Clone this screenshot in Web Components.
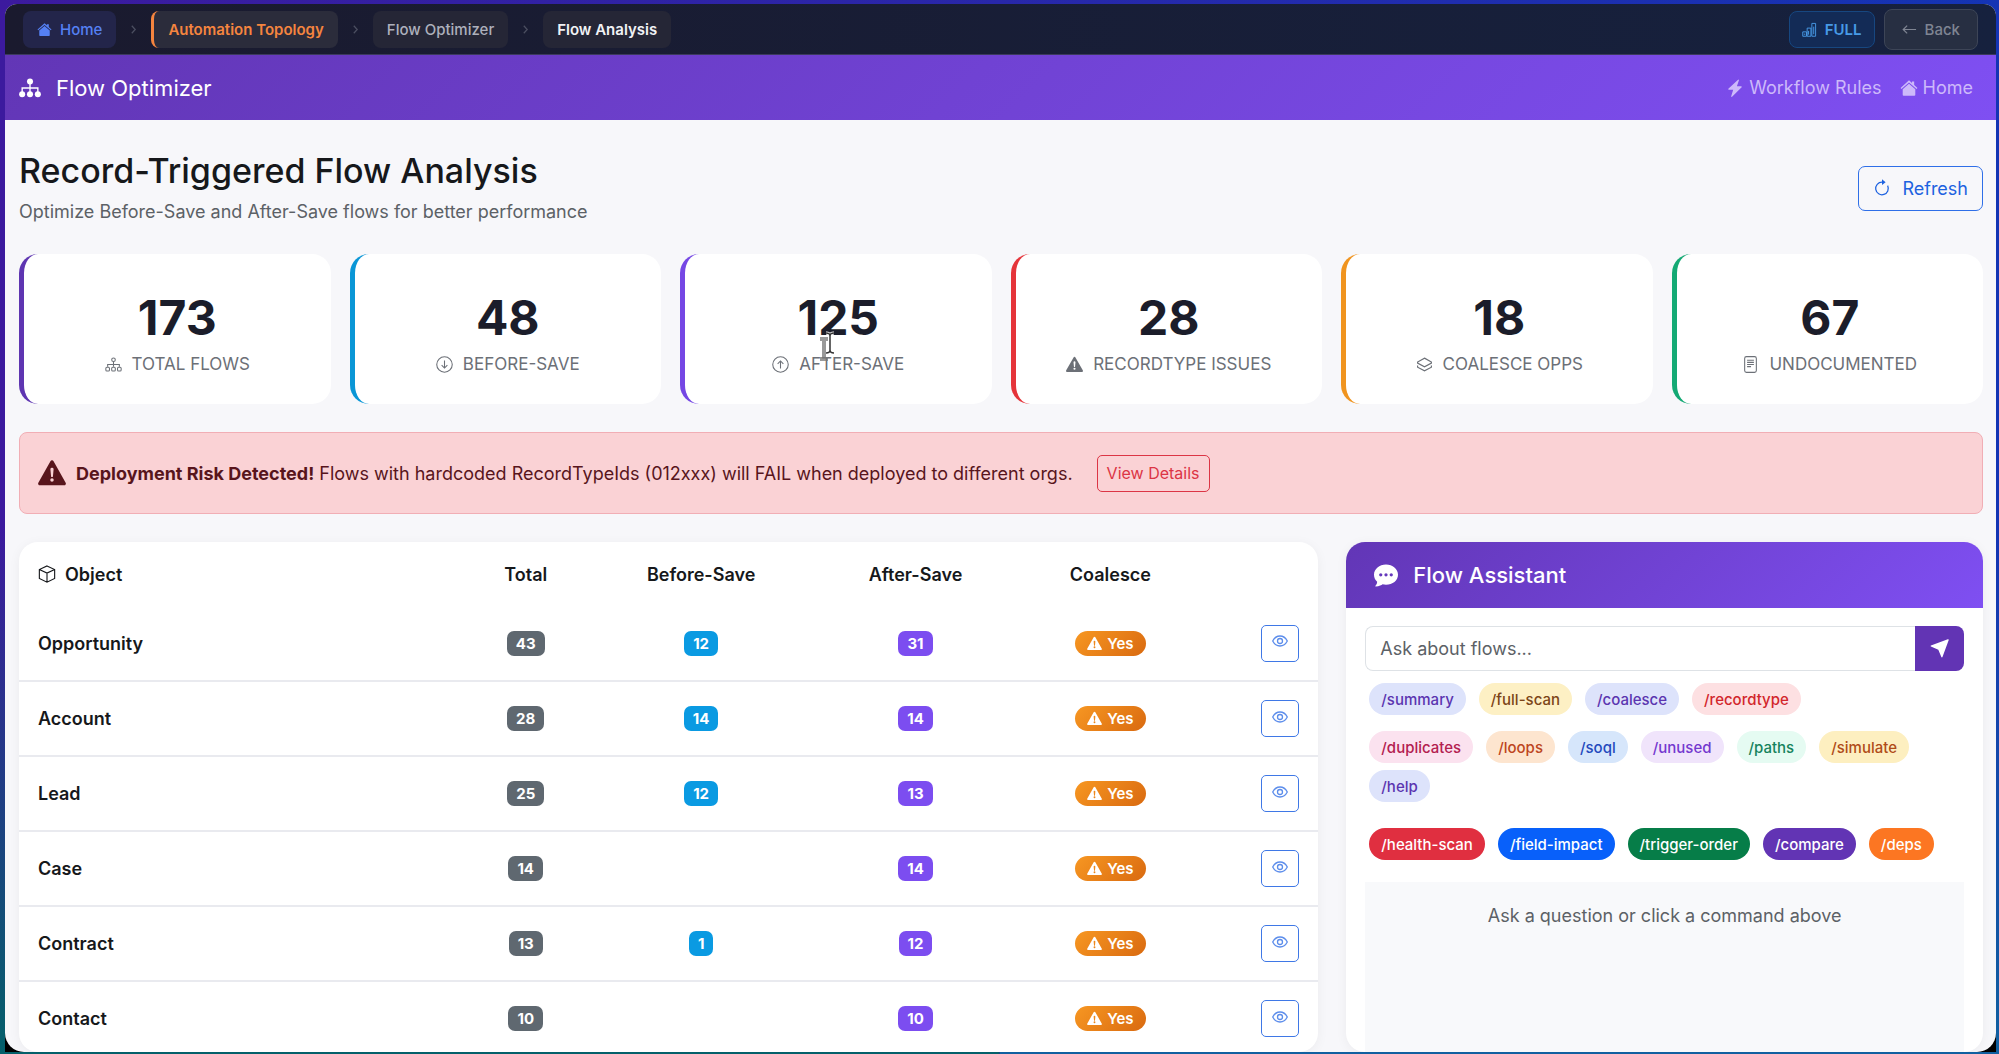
<!DOCTYPE html>
<html lang="en">
<head>
<meta charset="utf-8">
<title>Flow Optimizer</title>
<style>
  html, body {
    height: 100%;
    margin: 0;
  }

  body {
    box-sizing: border-box;
    padding: 4px 3px 2px 5px;
    overflow: hidden;
    background:
      linear-gradient(#000, #000) 5px calc(100% - 2px) / 19px 19px no-repeat,
      linear-gradient(#000, #000) calc(100% - 3px) calc(100% - 2px) / 19px 19px no-repeat,
      linear-gradient(to bottom, transparent 50%, #04606a) left / 50% 100% no-repeat,
      linear-gradient(to bottom, transparent 50%, #1160a0) right / 50% 100% no-repeat,
      linear-gradient(to right, #3c1a9e, #1434b4);
    font-family: Inter, "Liberation Sans", sans-serif;
    font-size: 18px;
    color: #212529;
  }
</style>
</head>
<body>
<flow-app></flow-app>

<script>
// 16x16 glyphs, drawn with currentColor
const icons = {
  house: '<path d="M8 1.2 10.6 3.5V2.3h2v3l2.9 2.6-.8 1L8 3.1 1.3 8.9l-.8-1z"/><path d="M8 4.2l5.6 4.9V14a.8.8 0 0 1-.8.8H3.2a.8.8 0 0 1-.8-.8V9.1z"/>',
  chevron: '<path d="M5.5 2.5 10.5 8l-5 5.5" fill="none" stroke="currentColor" stroke-width="1.8"/>',
  chart: '<g fill="none" stroke="currentColor"><path d="M.8 10.5h4v4.7h-4zM5.5 6.5h4v8.7h-4zM10.5 1.5h4v13.7h-4z"/><path d="M2 13h1.5M7 9.5v4M12.5 5v8"/></g>',
  arrow: '<path d="M15 8H1.5M5.5 3.8 1.3 8l4.2 4.2" fill="none" stroke="currentColor" stroke-width="1.3"/>',
  diagram: '<circle cx="8" cy="3.3" r="2.2"/><circle cx="2.3" cy="12.5" r="2.2"/><circle cx="8" cy="12.5" r="2.2"/><circle cx="13.7" cy="12.5" r="2.2"/><path d="M8 4v8M2.3 12V8h11.4v4" fill="none" stroke="currentColor"/>',
  diagramLine: '<g fill="none" stroke="currentColor"><circle cx="8" cy="3.5" r="1.7"/><rect x=".8" y="10.5" width="3.4" height="3.7" rx="1"/><rect x="6.3" y="10.5" width="3.4" height="3.7" rx="1"/><rect x="11.8" y="10.5" width="3.4" height="3.7" rx="1"/><path d="M8 5.2v5M2.5 10.2V8h11v2.2"/></g>',
  bolt: '<path d="M11.3.6a.5.5 0 0 1 .2.6L9.7 6.5h3.8a.5.5 0 0 1 .4.85l-8.5 8.5a.5.5 0 0 1-.8-.5L6.4 9.5H2.5a.5.5 0 0 1-.4-.85l8.6-8a.5.5 0 0 1 .6-.05z"/>',
  refresh: '<path d="M8 2.8a5.6 5.6 0 1 0 5 3.1" fill="none" stroke="currentColor" stroke-width="1.1"/><path d="M8 .3v5l3.2-2.5z"/>',
  down: '<g fill="none" stroke="currentColor"><circle cx="8" cy="8" r="7.3"/><path d="M8 4.3v7M5.3 8.7 8 11.4l2.7-2.7"/></g>',
  up: '<g fill="none" stroke="currentColor"><circle cx="8" cy="8" r="7.3"/><path d="M8 11.7v-7M5.3 7.3 8 4.6l2.7 2.7"/></g>',
  warning: '<path fill-rule="evenodd" d="M7.1 1.3a1 1 0 0 1 1.8 0l6.9 12.2a1 1 0 0 1-.9 1.5H1.1a1 1 0 0 1-.9-1.5zM8 5a.9.9 0 0 0-.9 1l.35 3.8a.55.55 0 0 0 1.1 0L8.9 6A.9.9 0 0 0 8 5zm0 6a1 1 0 1 0 0 2 1 1 0 0 0 0-2z"/>',
  layers: '<path d="M8 2 14.5 5.7v1L8 10.2 1.5 6.7v-1zM1.5 9v1.5L8 14l6.5-3.5V9" fill="none" stroke="currentColor" stroke-width="1.1"/>',
  file: '<rect x="2.5" y=".6" width="11" height="14.8" rx="1.7" fill="none" stroke="currentColor"/><path d="M4.8 4h6.4M4.8 6h6.4M4.8 8h6.4M4.8 10h3.7" stroke="currentColor"/>',
  box: '<path d="M8 .8 14.8 4v8L8 15.3 1.2 12V4zM1.2 4 8 7.2 14.8 4M8 7.2v8" fill="none" stroke="currentColor"/>',
  eye: '<g fill="none" stroke="currentColor" stroke-width="1.3"><path d="M.7 8S3.3 3 8 3s7.3 5 7.3 5-2.6 5-7.3 5S.7 8 .7 8z"/><circle cx="8" cy="8" r="2.5"/></g>',
  chat: '<path fill-rule="evenodd" d="M8 1c4.4 0 8 3 8 6.8s-3.6 6.7-8 6.7c-.8 0-1.6-.1-2.3-.3-.6.5-2.2 1.3-4.5 1.5-.3 0-.4-.3-.2-.5.7-.8 1.1-1.7 1.1-2.7C.8 11.3 0 9.7 0 7.8 0 4 3.6 1 8 1zM4.5 6.8a1.1 1.1 0 1 0 0 2.2 1.1 1.1 0 0 0 0-2.2zm3.5 0a1.1 1.1 0 1 0 0 2.2 1.1 1.1 0 0 0 0-2.2zm3.5 0a1.1 1.1 0 1 0 0 2.2 1.1 1.1 0 0 0 0-2.2z"/>',
  send: '<path d="M15 .3a.5.5 0 0 1 .7.7l-5.2 14.2a.5.5 0 0 1-.95 0L7 9 .8 6.4a.5.5 0 0 1 0-.9z"/>',
};

/**
 * Attach an open shadow root with the shared reset in front.
 * @param {HTMLElement} host
 * @param {string} html
 */
function render(host, html) {
  const template = document.createElement('template');
  template.innerHTML = `
    <style>
      *, *::before { box-sizing: border-box; }
      button, input { font: inherit; cursor: pointer; }
      a { color: inherit; text-decoration: none; }
    </style>${html}`;
  host.attachShadow({mode: 'open'}).appendChild(template.content.cloneNode(true));
}

/** Inline icon, scales with the font size. */
class FlowIcon extends HTMLElement {
  connectedCallback() {
    render(this, `
      <style>
        :host { display: inline-flex; flex: none; }
        svg { width: 1em; height: 1em; display: block; }
      </style>
      <svg viewBox="0 0 16 16" fill="currentColor" aria-hidden="true">${icons[this.getAttribute('name')]}</svg>`);
  }
}

/** Dark breadcrumb strip. */
class CrumbBar extends HTMLElement {
  constructor() {
    super();
    render(this, `
      <style>
        :host {
          display: flex;
          align-items: center;
          justify-content: space-between;
          height: 51px;
          padding: 0 18px;
          background: linear-gradient(to right, #1a1a2e, #16213e);
          border-bottom: 1px solid #3c3a5e;
          font-size: 15px;
          font-weight: 500;
        }
        nav, div { display: flex; align-items: center; gap: 9px; }
        nav { gap: 12px; }
        nav flow-icon { font-size: 11px; color: #4b4e60; }
        a {
          display: flex;
          align-items: center;
          gap: 8px;
          height: 37px;
          padding: 0 14px;
          border-radius: 8px;
          background: #252636;
          color: #adb0bc;
        }
        a flow-icon, nav a flow-icon { font-size: 15px; color: inherit; }
        .home { background: #23254a; color: #5580f4; }
        .area { background: #2b2c3b; color: #f5853f; border-left: 3px solid #f5853f; font-weight: 600; }
        .here { color: #f1f2f5; font-weight: 600; }
        button {
          display: flex;
          align-items: center;
          gap: 8px;
          height: 41px;
          padding: 0 17px;
          border: 1px solid #3d4557;
          border-radius: 8px;
          background: #272f42;
          color: #7f8592;
          font-weight: 500;
        }
        .full {
          height: 37px;
          padding: 0 12px;
          font-weight: 600;
          background: #132b56;
          border-color: #174780;
          color: #479ae6;
        }
      </style>
      <nav aria-label="Breadcrumb">
        <a class="home" href="#home"><flow-icon name="house"></flow-icon>Home</a>
        <flow-icon name="chevron"></flow-icon>
        <a class="area" href="#topology">Automation Topology</a>
        <flow-icon name="chevron"></flow-icon>
        <a href="#optimizer">Flow Optimizer</a>
        <flow-icon name="chevron"></flow-icon>
        <a class="here" href="#analysis">Flow Analysis</a>
      </nav>
      <div>
        <button class="full" type="button"><flow-icon name="chart"></flow-icon>FULL</button>
        <button type="button"><flow-icon name="arrow"></flow-icon>Back</button>
      </div>`);
  }
}

/** Purple application header. */
class AppHeader extends HTMLElement {
  constructor() {
    super();
    render(this, `
      <style>
        :host {
          display: flex;
          align-items: center;
          justify-content: space-between;
          height: 65px;
          padding: 0 23px 0 14px;
          background: linear-gradient(135deg, #6236b6, #7f4ff2);
          color: #fff;
        }
        .brand { display: flex; align-items: center; gap: 15px; font-size: 22px; }
        nav { display: flex; gap: 18px; color: #cdb9fa; }
        nav a { display: flex; align-items: center; gap: 5px; }
      </style>
      <a class="brand" href="#optimizer"><flow-icon name="diagram"></flow-icon>Flow Optimizer</a>
      <nav>
        <a href="#rules"><flow-icon name="bolt"></flow-icon>Workflow Rules</a>
        <a href="#home"><flow-icon name="house"></flow-icon>Home</a>
      </nav>`);
  }
}

/** Number with a caption and a coloured left edge. */
class StatCard extends HTMLElement {
  connectedCallback() {
    render(this, `
      <style>
        :host {
          display: flex;
          flex-direction: column;
          align-items: center;
          height: 150px;
          padding-top: 34px;
          border-left: 5px solid ${this.getAttribute('color')};
          border-radius: 19px;
          background: #fff;
        }
        strong { font-size: 48px; line-height: 60px; color: #1b1d2a; }
        span {
          display: flex;
          align-items: center;
          gap: 10px;
          line-height: 32px;
          font-size: 17px;
          color: #6c7077;
          text-transform: uppercase;
        }
      </style>
      <strong>${this.getAttribute('value')}</strong>
      <span><flow-icon name="${this.getAttribute('icon')}"></flow-icon><slot></slot></span>`);
  }
}

/** Red warning strip. */
class RiskAlert extends HTMLElement {
  constructor() {
    super();
    render(this, `
      <style>
        :host {
          display: flex;
          align-items: center;
          gap: 10px;
          height: 82px;
          padding: 0 18px;
          border: 1px solid #f1aeb5;
          border-radius: 8px;
          background: #fad2d5;
          color: #58151c;
        }
        flow-icon { font-size: 28px; }
        button {
          height: 37px;
          margin-left: 14px;
          padding: 0 9px;
          border: 1px solid #dc3545;
          border-radius: 5px;
          background: none;
          color: #dc3545;
          font-size: 16px;
        }
      </style>
      <flow-icon name="warning"></flow-icon>
      <span><slot></slot></span>
      <button type="button">View Details</button>`);
  }
}

const rows = [
  ['Opportunity', 43, 12, 31],
  ['Account', 28, 14, 14],
  ['Lead', 25, 12, 13],
  ['Case', 14, '', 14],
  ['Contract', 13, 1, 12],
  ['Contact', 10, '', 10],
];

/** Flow counts per object. */
class ObjectTable extends HTMLElement {
  constructor() {
    super();
    const badge = (n, cls) => n === '' ? '' : `<span class="badge ${cls}">${n}</span>`;
    const body = rows.map(([name, total, before, after]) => `
      <tr>
        <th scope="row">${name}</th>
        <td>${badge(total, 'total')}</td>
        <td>${badge(before, 'before')}</td>
        <td>${badge(after, 'after')}</td>
        <td><span class="badge yes"><flow-icon name="warning"></flow-icon>Yes</span></td>
        <td class="view"><button type="button" aria-label="View ${name}"><flow-icon name="eye"></flow-icon></button></td>
      </tr>`).join('');
    render(this, `
      <style>
        :host {
          display: block;
          overflow: hidden;
          border-radius: 19px;
          background: #fff;
          box-shadow: 0 2px 12px rgba(0, 0, 0, .05);
        }
        table { width: 100%; border-collapse: collapse; table-layout: fixed; color: #16181b; }
        th, td { padding: 0; text-align: center; font-weight: 600; }
        thead th { height: 64px; }
        tbody tr { height: 75px; border-bottom: 2px solid #e9eaef; }
        th:first-child { width: 32%; padding-left: 19px; text-align: left; }
        th:nth-child(2) { width: 14%; }
        th:nth-child(3) { width: 13%; }
        th:nth-child(4) { width: 20%; }
        th:nth-child(5) { width: 10%; }
        .head { display: flex; align-items: center; gap: 9px; }
        .badge {
          display: inline-flex;
          align-items: center;
          gap: 5px;
          height: 25px;
          padding: 0 9px;
          border-radius: 7px;
          color: #fff;
          font-size: 15px;
          font-weight: 700;
          vertical-align: middle;
        }
        .total { background: #5f6870; }
        .before { background: #0a9ae2; }
        .after { background: #7c4df0; }
        .yes { padding: 0 12px; border-radius: 13px; background: linear-gradient(135deg, #f79722, #d96a10); font-weight: 600; }
        .view { padding-right: 19px; text-align: right; }
        button {
          height: 37px;
          padding: 0 10px;
          border: 1px solid #3f78e6;
          border-radius: 5px;
          background: none;
          color: #5c8deb;
          font-size: 16px;
          vertical-align: middle;
        }
      </style>
      <table>
        <thead>
          <tr>
            <th scope="col"><span class="head"><flow-icon name="box"></flow-icon>Object</span></th>
            <th scope="col">Total</th>
            <th scope="col">Before-Save</th>
            <th scope="col">After-Save</th>
            <th scope="col">Coalesce</th>
            <td></td>
          </tr>
        </thead>
        <tbody>${body}</tbody>
      </table>`);
  }
}

// [command, background, text]
const commands = [
  [
    ['/summary', '#dde3fb', '#5b35b0'],
    ['/full-scan', '#fdf0c4', '#7c4518'],
    ['/coalesce', '#dde3fb', '#5b35b0'],
    ['/recordtype', '#fde0e2', '#d2262c'],
  ],
  [
    ['/duplicates', '#fbe2ef', '#b3204f'],
    ['/loops', '#fde5cf', '#bd4521'],
    ['/soql', '#d6e6fb', '#2349bd'],
    ['/unused', '#f0e4fb', '#7438cf'],
    ['/paths', '#e5fbf2', '#15835d'],
    ['/simulate', '#fdefc0', '#b04c18'],
    ['/help', '#dde3fb', '#5b35b0'],
  ],
  [
    ['/health-scan', '#e02f40', '#fff'],
    ['/field-impact', '#0860fa', '#fff'],
    ['/trigger-order', '#067d48', '#fff'],
    ['/compare', '#6234b4', '#fff'],
    ['/deps', '#fc7622', '#fff'],
  ],
];

/** Chat panel with command chips. */
class FlowAssistant extends HTMLElement {
  constructor() {
    super();
    const chips = commands.map((group) => `
      <div class="chips">${group.map(([text, bg, fg]) =>
        `<button type="button" style="background:${bg};color:${fg}">${text}</button>`).join('')}</div>`).join('');
    render(this, `
      <style>
        :host {
          display: flex;
          flex-direction: column;
          overflow: hidden;
          border-radius: 19px;
          background: #fff;
          box-shadow: 0 2px 12px rgba(0, 0, 0, .05);
        }
        h2 {
          display: flex;
          align-items: center;
          gap: 15px;
          height: 66px;
          margin: 0;
          padding: 0 28px;
          background: linear-gradient(135deg, #6236b6, #7f4ff2);
          color: #fff;
          font-size: 22px;
          font-weight: 500;
        }
        h2 flow-icon { font-size: 24px; }
        .body { display: flex; flex: 1; flex-direction: column; padding: 18px 19px 0; }
        form { display: flex; height: 45px; margin-bottom: 12px; }
        input {
          flex: 1;
          min-width: 0;
          padding: 0 14px;
          border: 1px solid #dee2e6;
          border-right: 0;
          border-radius: 8px 0 0 8px;
          cursor: text;
        }
        input::placeholder { color: #5c6166; opacity: 1; }
        form button {
          width: 49px;
          padding: 0 15px;
          border: 0;
          border-radius: 0 8px 8px 0;
          background: #6234b4;
          color: #fff;
          font-size: 19px;
        }
        form flow-icon { display: flex; }
        .chips { display: flex; flex-wrap: wrap; gap: 7px 13px; padding: 0 4px; margin-bottom: 16px; }
        .chips:nth-of-type(2) { margin-bottom: 26px; }
        .chips:nth-of-type(3) { margin-bottom: 22px; }
        .chips button {
          height: 32px;
          padding: 0 12px;
          border: 0;
          border-radius: 16px;
          font-size: 15px;
          font-weight: 500;
        }
        p { flex: 1; margin: 0; padding: 20px; background: #f8f9fb; color: #5c6166; text-align: center; line-height: 28px; }
      </style>
      <h2><flow-icon name="chat"></flow-icon>Flow Assistant</h2>
      <div class="body">
        <form>
          <input type="text" aria-label="Ask about flows" placeholder="Ask about flows...">
          <button type="button" aria-label="Send"><flow-icon name="send"></flow-icon></button>
        </form>
        ${chips}
        <p>Ask a question or click a command above</p>
      </div>`);
  }
}

/** Text cursor that floats over the cards. */
class TextPointer extends HTMLElement {
  constructor() {
    super();
    render(this, `
      <style>
        :host { position: absolute; left: 41%; top: 331px; pointer-events: none; }
        svg { display: block; }
      </style>
      <svg width="20" height="34" viewBox="0 0 20 34" fill="none" aria-hidden="true">
        <path d="M0 8h8M4 8v20M0 28h8" stroke="#777" stroke-opacity=".75" stroke-width="4"/>
        <path d="M6 2q4 0 4 3 0-3 4-3M10 5v14M6 22q4 0 4-3 0 3 4 3" stroke="#fff" stroke-width="3"/>
        <path d="M6 2q4 0 4 3 0-3 4-3M10 5v14M6 22q4 0 4-3 0 3 4 3" stroke="#333" stroke-width="1.5"/>
      </svg>`);
  }
}

/** Page shell. */
class FlowApp extends HTMLElement {
  constructor() {
    super();
    render(this, `
      <style>
        :host {
          display: flex;
          flex-direction: column;
          height: 100%;
          overflow: hidden;
          border-radius: 12px 12px 19px 19px;
          background: #f7f7fa;
        }
        crumb-bar, app-header { flex: none; }
        main { flex: 1; min-height: 0; display: flex; flex-direction: column; padding: 28px 13px 0 14px; }
        .title { display: flex; align-items: center; justify-content: space-between; height: 80px; margin-bottom: 26px; }
        h1 { margin: 0 0 2px; font-size: 34px; line-height: 46px; font-weight: 500; color: #16181b; }
        .title p { margin: 0; line-height: 32px; color: #5c6166; }
        .title button {
          display: flex;
          align-items: center;
          gap: 11px;
          height: 45px;
          padding: 0 14px;
          border: 1px solid #2f6fe8;
          border-radius: 7px;
          background: none;
          color: #1d62e0;
        }
        .stats { display: grid; grid-template-columns: repeat(6, 1fr); gap: 19px; margin-bottom: 28px; }
        risk-alert { flex: none; margin-bottom: 28px; }
        .columns { flex: 1; min-height: 0; display: grid; grid-template-columns: 1300fr 637fr; gap: 28px; }
      </style>
      <crumb-bar></crumb-bar>
      <app-header></app-header>
      <main>
        <div class="title">
          <div>
            <h1>Record-Triggered Flow Analysis</h1>
            <p>Optimize Before-Save and After-Save flows for better performance</p>
          </div>
          <button type="button"><flow-icon name="refresh"></flow-icon>Refresh</button>
        </div>
        <div class="stats">
          <stat-card value="173" icon="diagramLine" color="#5e35b1">Total Flows</stat-card>
          <stat-card value="48" icon="down" color="#0a96d6">Before-Save</stat-card>
          <stat-card value="125" icon="up" color="#7547e4">After-Save</stat-card>
          <stat-card value="28" icon="warning" color="#e5343a">RecordType Issues</stat-card>
          <stat-card value="18" icon="layers" color="#f0941f">Coalesce Opps</stat-card>
          <stat-card value="67" icon="file" color="#14a974">Undocumented</stat-card>
        </div>
        <risk-alert><strong>Deployment Risk Detected!</strong> Flows with hardcoded RecordTypeIds (012xxx) will FAIL when deployed to different orgs.</risk-alert>
        <div class="columns">
          <object-table></object-table>
          <flow-assistant></flow-assistant>
        </div>
      </main>
      <text-pointer></text-pointer>`);
  }
}

customElements.define('flow-icon', FlowIcon);
customElements.define('crumb-bar', CrumbBar);
customElements.define('app-header', AppHeader);
customElements.define('stat-card', StatCard);
customElements.define('risk-alert', RiskAlert);
customElements.define('object-table', ObjectTable);
customElements.define('flow-assistant', FlowAssistant);
customElements.define('text-pointer', TextPointer);
customElements.define('flow-app', FlowApp);
</script>
</body>
</html>
